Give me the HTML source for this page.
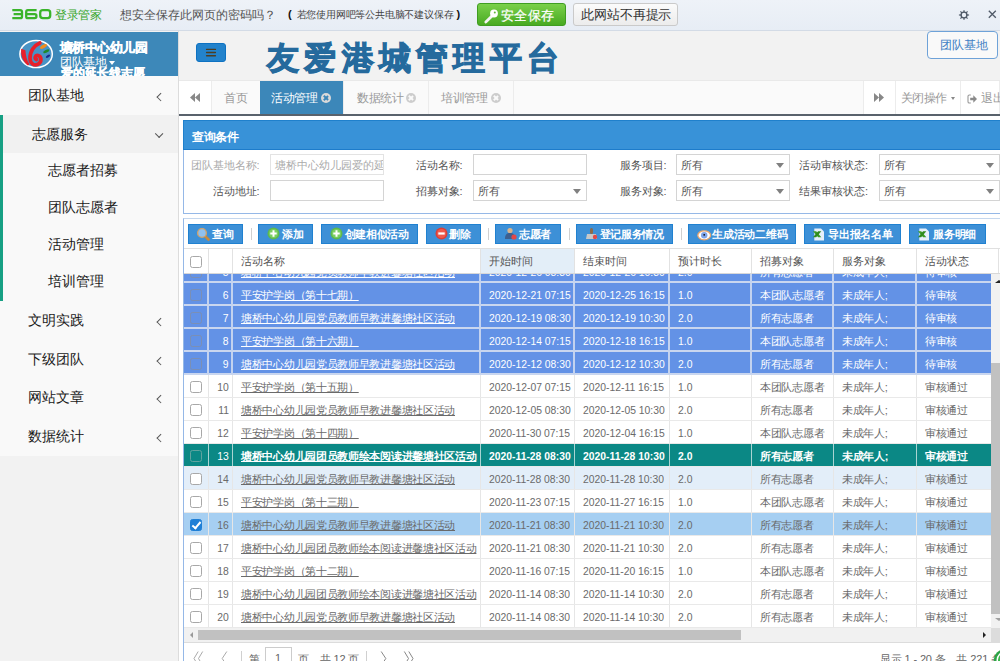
<!DOCTYPE html>
<html><head><meta charset="utf-8">
<style>
*{box-sizing:border-box;margin:0;padding:0}
html,body{width:1000px;height:661px;overflow:hidden}
body{position:relative;font-family:"Liberation Sans",sans-serif;background:#f2f2f2;color:#333}
.a{position:absolute}
/* top 360 bar */
#top{left:0;top:0;width:1000px;height:31px;background:linear-gradient(#eef2f8,#e7edf5);border-bottom:1px solid #d3dbe6}

#tgj{left:55px;top:7px;font-size:12px;color:#36a628;font-weight:normal;letter-spacing:-0.4px}
#tq{left:120px;top:7px;font-size:12px;color:#555}
#tq2{left:288px;top:8px;font-size:10px;color:#444;white-space:nowrap}
#bsave{left:477px;top:3px;width:89px;height:23px;border:1px solid #3f9d22;border-radius:3px;background:linear-gradient(#7ad04a,#48aa22);color:#fff;font-size:13px;line-height:23px;padding-left:22.5px;letter-spacing:0.5px;-webkit-text-stroke:0.25px #fff}
#bno{left:573px;top:3px;width:105px;height:23px;border:1px solid #cacaca;border-radius:3px;background:linear-gradient(#fbfbfb,#ececec);color:#333;font-size:13px;line-height:21px;padding-left:7px;letter-spacing:-0.1px}
/* header */
#logo{left:0;top:32px;width:178px;height:44px;background:#3d88b9;overflow:hidden}
#sbline{left:178px;top:31px;width:1px;height:630px;background:#dcdcdc}
#hamb{left:196px;top:43px;width:30px;height:19px;background:#2383cc;border:1px solid #0e72c2;border-radius:3px}
#hamb i{position:absolute;left:10px;width:10px;height:1.7px;background:#4b3f2a}
#title{left:267.3px;top:37px;font-size:32px;font-weight:900;color:#256a9d;letter-spacing:5.15px;-webkit-text-stroke:1.1px #256a9d;white-space:nowrap}
#bteam{left:927px;top:31px;width:71px;height:28px;border:1px solid #6ea2d8;border-radius:4px;background:#f9f9f9;color:#3f7fc4;font-size:12px;line-height:26px;padding-left:11.5px}
/* sidebar */
#menu{left:0;top:76px;width:178px;height:380px;background:#f9f9f9}
.mi{position:absolute;left:0;width:178px;font-size:14px;color:#1a1a1a;white-space:nowrap;font-family:"Liberation Serif",serif}
.mi span{position:absolute;left:28px}
.chev{position:absolute;left:158px;width:5.5px;height:5.5px;border-left:1.1px solid #555;border-bottom:1.1px solid #555;transform:rotate(45deg)}
/* tabs */
#tabs{left:179px;top:80px;width:821px;height:36px;background:#fafafa;border-top:1px solid #e9e9e9;border-bottom:2px solid #59626c}
.tb{position:absolute;top:0;height:33px;border-right:1px solid #ececec;font-size:12px;color:#999;line-height:35px;white-space:nowrap;letter-spacing:-0.3px}
.xc{position:absolute;width:10px;height:10px;border-radius:50%;background:#cdcdcd;top:11.5px}
.xc:before,.xc:after{content:"";position:absolute;left:4.2px;top:2px;width:1.6px;height:6px;background:#fafafa;transform:rotate(45deg)}
.xc:after{transform:rotate(-45deg)}
.xc.act{background:#d9d9d9}.xc.act:before,.xc.act:after{background:#3c87b9}
#content{left:179px;top:116px;width:821px;height:545px;background:#fff}
/* query panel */
#qp{left:183px;top:120px;width:817px;height:94px;border-left:1px solid #95b8e7;border-bottom:1px solid #95b8e7;background:#fff}
#qph{position:absolute;left:-1px;top:0;width:818px;height:30px;background:#3892d8;border-top:1px solid #1f80cc;border-left:1px solid #1f80cc;border-bottom:1px solid #1d7ccb}
#qph b{position:absolute;left:8px;top:8px;color:#fff;font-size:12px;letter-spacing:-0.4px}
.lb{position:absolute;font-size:11px;color:#555;text-align:right;white-space:nowrap;letter-spacing:-0.05px;font-weight:normal}
.inp{position:absolute;height:21px;border:1px solid #d4d4d4;background:#fff;font-size:11px;color:#555;line-height:21px;padding-left:4px;white-space:nowrap;overflow:hidden;letter-spacing:0px}
.inp.sel:after{content:"";position:absolute;right:5.5px;top:8px;border-left:4.5px solid transparent;border-right:4.5px solid transparent;border-top:5px solid #808080}
/* grid panel */
#gp{left:183px;top:218px;width:817px;height:443px;border-left:1px solid #95b8e7;border-top:1px solid #c5d7ee;background:#fff;overflow:hidden}
.btn{position:absolute;top:5px;height:20px;background:#3d90d7;border:1px solid #2081d0;color:#fff;font-size:11px;font-weight:bold;line-height:20px;white-space:nowrap;letter-spacing:-0.3px}
.btn .ic{position:absolute;top:2px;left:8px;width:13px;height:13px}
.btn span{position:absolute;left:23px;top:-1px}
.sep{position:absolute;top:9px;width:1px;height:12px;background:#d0d0d0}
#ghead{position:absolute;left:0;top:29px;width:816px;height:26px;background:#fff;border-top:1px solid #e0e0e0;border-bottom:1px solid #d8d8d8;z-index:3}
.th{position:absolute;top:0;height:24px;border-right:1px solid #e2e2e2;font-size:11px;color:#555;line-height:25px;padding-left:8px;white-space:nowrap;letter-spacing:0px}
.th.hl{background:#e3eef8}
.tr{position:absolute;left:0;width:808px;height:23px;border-bottom:1px solid #e9e9e9;background:#fff}
.td{position:absolute;top:0;height:22px;border-right:1px solid #e6e6e6;font-size:11px;color:#6a6a6a;line-height:24px;white-space:nowrap;overflow:hidden}
.td.ct{padding-left:8px;letter-spacing:-0.3px}
.td.cn{padding-left:8px}
.td.c1{text-align:right;padding-right:3px}
.td s{text-decoration:none;display:inline-block;font-size:11.5px;transform:scaleX(0.9);transform-origin:left center;position:relative;top:0px}
.td.c1 s{transform-origin:right center}
.td u{text-decoration:underline}
.cb{position:absolute;left:5.8px;top:6px;width:12px;height:12px;border:1px solid #a8a8a8;border-radius:2.5px;background:#fff}
.th .cb{top:6.5px}
.tr.sel{background:#6392e6;border-bottom:2px solid #c9d6ef}
.tr.sel .td{color:#fff;border-right:2px solid #c3d2ef}
.tr.sel .cb{background:transparent;border-color:#7b8fb4}
.tr.teal{background:#0b8885;border-bottom:1px solid #e9e9e9}
.tr.teal .td{color:#fff;font-weight:bold;border-right:1px solid #a9d4d2}
.tr.teal .td.c1{font-weight:normal}
.tr.teal .cb{background:transparent;border-color:#5fa39f}
.tr.hov{background:#e3eef9}
.tr.chk{background:#a6cff2}
.cb.on{background:#1f7fd6;border-color:#1f7fd6}
.cb.on:after{content:"";position:absolute;left:3px;top:0px;width:3px;height:7px;border-right:2px solid #fff;border-bottom:2px solid #fff;transform:rotate(40deg)}
#vs{position:absolute;left:807px;top:55px;width:10px;height:354px;background:#f1f1f1;z-index:4}
#vthumb{position:absolute;left:0;top:89px;width:9px;height:251px;background:#c1c1c1}
#hs{position:absolute;left:0;top:409px;width:808px;height:15px;background:#f1f1f1;border-bottom:1px solid #dcdcdc;z-index:4}
#hthumb{position:absolute;left:14px;top:2px;width:543px;height:10px;background:#c1c1c1}
#corner{position:absolute;left:807px;top:409px;width:10px;height:15px;background:#dcdcdc;z-index:4}
.pg{position:absolute;top:432.5px;font-size:11px;color:#666;white-space:nowrap;letter-spacing:-0.15px}
</style></head><body>
<!-- top bar -->
<div id="top" class="a"></div>
<svg id="t360" class="a" style="left:12px;top:9px" width="40" height="11" viewBox="0 0 40 11"><g fill="none" stroke="#3ab42a" stroke-width="2.3" stroke-linejoin="round"><path d="M0.3 1.2H8.2Q10 1.2 10 3V7.4Q10 9.2 8.2 9.2H0.3M1.6 5.2H10"/><path d="M24.6 1.2H15.8Q14.2 1.2 14.2 3V7.4Q14.2 9.2 15.8 9.2H22.8Q24.4 9.2 24.4 7.6V6.8Q24.4 5.2 22.8 5.2H14.2"/><rect x="28.2" y="1.2" width="10" height="8" rx="2.6"/></g></svg>
<div id="tgj" class="a">登录管家</div>
<div id="tq" class="a">想安全保存此网页的密码吗？</div>
<div id="tq2" class="a"><b style="color:#111;font-size:11px">(</b><span style="margin-left:5px;letter-spacing:-0.2px">若您使用网吧等公共电脑不建议保存</span><b style="color:#111;font-size:11px;margin-left:3px">)</b></div>
<div id="bsave" class="a"><svg style="position:absolute;left:5px;top:4px" width="16" height="16" viewBox="0 0 16 16"><path d="M9.5 7.5L2.8 14" stroke="#f4f4f4" stroke-width="2.8" stroke-linecap="round"/><circle cx="11" cy="5.5" r="3.9" fill="#fff"/><circle cx="11.8" cy="4.6" r="1" fill="#5fb83a"/></svg>安全保存</div>
<div id="bno" class="a">此网站不再提示</div>
<svg class="a" style="left:958px;top:8.5px" width="12" height="12" viewBox="0 0 12 12"><g fill="#505a68"><path d="M5.2 3.2L5.6 0.9H6.4L6.8 3.2Z" transform="rotate(0 6 6)"/><path d="M5.2 3.2L5.6 0.9H6.4L6.8 3.2Z" transform="rotate(45 6 6)"/><path d="M5.2 3.2L5.6 0.9H6.4L6.8 3.2Z" transform="rotate(90 6 6)"/><path d="M5.2 3.2L5.6 0.9H6.4L6.8 3.2Z" transform="rotate(135 6 6)"/><path d="M5.2 3.2L5.6 0.9H6.4L6.8 3.2Z" transform="rotate(180 6 6)"/><path d="M5.2 3.2L5.6 0.9H6.4L6.8 3.2Z" transform="rotate(225 6 6)"/><path d="M5.2 3.2L5.6 0.9H6.4L6.8 3.2Z" transform="rotate(270 6 6)"/><path d="M5.2 3.2L5.6 0.9H6.4L6.8 3.2Z" transform="rotate(315 6 6)"/></g><circle cx="6" cy="6" r="2.9" fill="none" stroke="#505a68" stroke-width="1.4"/></svg>
<svg class="a" style="left:987.5px;top:10px" width="9" height="9" viewBox="0 0 9 9"><path d="M0.8 0.8L7.8 7.8M7.8 0.8L0.8 7.8" stroke="#505a68" stroke-width="1.3"/></svg>

<!-- header -->
<div id="logo" class="a">
 <svg style="position:absolute;left:0;top:0" width="60" height="44" viewBox="0 0 60 44">
  <ellipse cx="36.1" cy="22" rx="16.2" ry="13.6" fill="#4893c5" stroke="#fff" stroke-width="1.5"/>
  <path d="M21.2 16.8 C20.5 23 22.5 29.5 28 33.6 L29.4 32.2 C26.6 28 25.8 23 25.4 18.2 Z" fill="#e8202a"/>
  <path d="M39.8 11 C34 13.5 29.8 19.5 30 26.5 C30.2 31.5 34 34 38 32.2 C41.8 30.3 42 24.5 38 23.5 C35.2 22.8 34.2 26.3 36.5 27.5" fill="none" stroke="#e8202a" stroke-width="3.7" stroke-linecap="round"/>
  <ellipse cx="43.5" cy="14.5" rx="3.8" ry="1.6" transform="rotate(-28 43.5 14.5)" fill="#f28c1c"/>
  <ellipse cx="46.3" cy="19.3" rx="3.3" ry="1.4" transform="rotate(-25 46.3 19.3)" fill="#1f8a2a"/>
  <ellipse cx="48" cy="24.2" rx="2.4" ry="1.2" transform="rotate(-30 48 24.2)" fill="#1b2a8c"/>
 </svg>
 <div style="position:absolute;left:60px;top:8px;font-size:12.5px;font-weight:900;-webkit-text-stroke:0.35px #fff;color:#fff;white-space:nowrap;letter-spacing:-0.55px">塘桥中心幼儿园</div>
 <div style="position:absolute;left:60px;top:22px;font-size:12px;color:#fff;white-space:nowrap;letter-spacing:-0.5px">团队基地</div>
 <div style="position:absolute;left:109px;top:29px;border-left:3px solid transparent;border-right:3px solid transparent;border-top:4px solid #fff"></div>
 <div style="position:absolute;left:61px;top:33px;font-size:12px;font-weight:900;-webkit-text-stroke:0.35px #fff;color:#fff;white-space:nowrap;letter-spacing:0px">爱的延长线志愿</div>
</div>
<div id="sbline" class="a"></div>
<div id="hamb" class="a"><svg style="position:absolute;left:-1px;top:-1px" width="30" height="19" viewBox="0 0 30 19"><path d="M10.6 6.4H19.4M10.6 9.5H19.4M10.6 12.7H19.4" stroke="#4d3d22" stroke-width="1.4" stroke-linecap="round"/></svg></div>
<div id="title" class="a">友爱港城管理平台</div>
<div id="bteam" class="a">团队基地</div>

<!-- sidebar -->
<div id="menu" class="a"></div>
<div class="a" style="left:0;top:115px;width:178px;height:37.6px;background:#f1f1f1"></div>
<div class="a" style="left:0;top:115px;width:3px;height:186px;background:#17a084"></div>
<div class="mi" style="top:87px"><span>团队基地</span><i class="chev" style="top:7px"></i></div>
<div class="mi" style="top:126px"><span style="left:32px">志愿服务</span><i class="chev" style="top:4.5px;left:155.5px;transform:rotate(-45deg)"></i></div>
<div class="mi" style="top:162px"><span style="left:48px">志愿者招募</span></div>
<div class="mi" style="top:199px"><span style="left:48px">团队志愿者</span></div>
<div class="mi" style="top:236px"><span style="left:48px">活动管理</span></div>
<div class="mi" style="top:273px"><span style="left:48px">培训管理</span></div>
<div class="mi" style="top:312px"><span>文明实践</span><i class="chev" style="top:7px"></i></div>
<div class="mi" style="top:351px"><span>下级团队</span><i class="chev" style="top:7px"></i></div>
<div class="mi" style="top:389px"><span>网站文章</span><i class="chev" style="top:7px"></i></div>
<div class="mi" style="top:428px"><span>数据统计</span><i class="chev" style="top:7px"></i></div>

<!-- tabs -->
<div id="content" class="a"></div>
<div id="tabs" class="a">
 <div class="tb" style="left:0;width:33px;background:#fff">
  <svg style="position:absolute;left:11px;top:12px" width="10" height="9" viewBox="0 0 10 9"><path d="M5 0L0 4.5L5 9ZM10 0L5 4.5L10 9Z" fill="#888"/></svg></div>
 <div class="tb" style="left:33px;width:49px;padding-left:12px">首页</div>
 <div class="tb" style="left:81px;width:84px;background:#3c87b9;color:#fff;padding-left:11px">活动管理<i class="xc act" style="left:61px"></i></div>
 <div class="tb" style="left:165px;width:85px;padding-left:13px">数据统计<i class="xc" style="left:62px"></i></div>
 <div class="tb" style="left:250px;width:85px;padding-left:12px">培训管理<i class="xc" style="left:62px"></i></div>
 <div class="tb" style="left:684px;width:33px;background:#fff;border-left:1px solid #ececec">
  <svg style="position:absolute;left:10px;top:12px" width="10" height="9" viewBox="0 0 10 9"><path d="M0 0L5 4.5L0 9ZM5 0L10 4.5L5 9Z" fill="#888"/></svg></div>
 <div class="tb" style="left:716px;width:66px;background:#fff;padding-left:5px;border-left:1px solid #ececec;letter-spacing:-0.6px">关闭操作<i style="position:absolute;left:54.5px;top:15.5px;border-left:2.7px solid transparent;border-right:2.7px solid transparent;border-top:3px solid #888"></i></div>
 <div class="tb" style="left:782px;width:39px;background:#fff;padding-left:20px">退出
  <svg style="position:absolute;left:6px;top:12.5px" width="11" height="10" viewBox="0 0 11 10"><path d="M3.8 1H2.3Q1 1 1 2.3V7.7Q1 9 2.3 9H3.8" stroke="#999" stroke-width="1.1" fill="none"/><path d="M3.2 3.8H6.3V1.2L10 5L6.3 8.8V6.2H3.2Z" fill="#8a8a8a"/></svg></div>
</div>

<!-- query panel -->
<div id="qp" class="a">
 <div id="qph"><b>查询条件</b></div>
 <div class="lb" style="left:-24.5px;width:100px;top:38px;color:#aaa;">团队基地名称:</div>
 <div class="inp" style="left:86px;top:34px;width:114px;color:#aaa;border-color:#e3e3e3">塘桥中心幼儿园爱的延长线志愿</div>
 <div class="lb" style="left:-24.5px;width:100px;top:64px;">活动地址:</div>
 <div class="inp" style="left:86px;top:60px;width:114px"></div>
 <div class="lb" style="left:178.5px;width:100px;top:38px;">活动名称:</div>
 <div class="inp" style="left:289px;top:34px;width:114px"></div>
 <div class="lb" style="left:178.5px;width:100px;top:64px;">招募对象:</div>
 <div class="inp sel" style="left:289px;top:60px;width:114px">所有</div>
 <div class="lb" style="left:382.5px;width:100px;top:38px;">服务项目:</div>
 <div class="inp sel" style="left:492px;top:34px;width:114px">所有</div>
 <div class="lb" style="left:382.5px;width:100px;top:64px;">服务对象:</div>
 <div class="inp sel" style="left:492px;top:60px;width:114px">所有</div>
 <div class="lb" style="left:584px;width:100px;top:38px;">活动审核状态:</div>
 <div class="inp sel" style="left:695px;top:34px;width:121px">所有</div>
 <div class="lb" style="left:584px;width:100px;top:64px;">结果审核状态:</div>
 <div class="inp sel" style="left:695px;top:60px;width:121px">所有</div>
</div>

<!-- grid panel -->
<div id="gp" class="a">
 <div class="btn" style="left:4.2px;width:55.2px"><svg class="ic" style="left:6.5px;top:1.5px;width:14px;height:14px" viewBox="0 0 14 14"><path d="M8.8 8.8L12.5 12.5" stroke="#c98a3c" stroke-width="2.6" stroke-linecap="round"/><circle cx="6" cy="6" r="4.4" fill="#8fc1f0" stroke="#cfa36c" stroke-width="1.4"/></svg><span>查询</span></div>
 <div class="sep" style="left:66.8px"></div>
 <div class="btn" style="left:74.1px;width:55.4px"><svg class="ic" viewBox="0 0 13 13"><circle cx="6.5" cy="6.5" r="6" fill="#5db94e"/><circle cx="6.5" cy="6.5" r="4.6" fill="#7bcf62"/><path d="M6.5 3.3V9.7M3.3 6.5H9.7" stroke="#fff" stroke-width="2"/></svg><span>添加</span></div>
 <div class="btn" style="left:136.6px;width:97.4px"><svg class="ic" viewBox="0 0 13 13"><circle cx="6.5" cy="6.5" r="6" fill="#5db94e"/><circle cx="6.5" cy="6.5" r="4.6" fill="#7bcf62"/><path d="M6.5 3.3V9.7M3.3 6.5H9.7" stroke="#fff" stroke-width="2"/></svg><span>创建相似活动</span></div>
 <div class="btn" style="left:241.6px;width:55.2px"><svg class="ic" viewBox="0 0 13 13"><circle cx="6.5" cy="6.5" r="6" fill="#d8403a"/><circle cx="6.5" cy="6.5" r="4.6" fill="#ef5a4c"/><path d="M3.3 6.5H9.7" stroke="#fff" stroke-width="2.2"/></svg><span style="left:22.5px">删除</span></div>
 <div class="sep" style="left:304.2px"></div>
 <div class="btn" style="left:311px;width:66px"><svg class="ic" viewBox="0 0 13 13"><circle cx="6" cy="3.5" r="2.6" fill="#d9b38a"/><path d="M1 12C1 7 3 6 6 6C9 6 11 7 11 12Z" fill="#3d5f8f"/><circle cx="10" cy="10" r="2.6" fill="#e04848"/></svg><span>志愿者</span></div>
 <div class="sep" style="left:384.6px"></div>
 <div class="btn" style="left:391.7px;width:97.8px"><svg class="ic" viewBox="0 0 13 13"><rect x="5" y="1" width="3" height="6" rx="1.5" fill="#8a6a4a"/><path d="M1 12L2 7H11L12 12Z" fill="#c8c8c8"/><circle cx="10" cy="10" r="2.2" fill="#e04848"/></svg><span>登记服务情况</span></div>
 <div class="sep" style="left:497.2px"></div>
 <div class="btn" style="left:504.4px;width:108.1px"><svg class="ic" style="width:15px;height:11px;left:8px;top:4.5px" viewBox="0 0 15 11"><ellipse cx="7.2" cy="5.3" rx="6.4" ry="4.5" fill="#fff" stroke="#e8a46c" stroke-width="1.3"/><circle cx="7.2" cy="5.3" r="3.2" fill="#7ea3ea"/><circle cx="7.2" cy="4.8" r="0.9" fill="#111"/></svg><span>生成活动二维码</span></div>
 <div class="btn" style="left:620.3px;width:97px"><svg class="ic" style="left:7.5px;top:2.5px" viewBox="0 0 13 13"><path d="M1.3 0.5H8L11 3.5V12.5H1.3Z" fill="#e6effa"/><path d="M0 3.3H3.2L8.3 9.2H5.1Z" fill="#3a9a22"/><path d="M8.3 3.3H5.1L0 9.2H3.2Z" fill="#2f8a1c"/></svg><span>导出报名名单</span></div>
 <div class="btn" style="left:725.3px;width:76.4px"><svg class="ic" style="left:7.5px;top:2.5px" viewBox="0 0 13 13"><path d="M1.3 0.5H8L11 3.5V12.5H1.3Z" fill="#e6effa"/><path d="M0 3.3H3.2L8.3 9.2H5.1Z" fill="#3a9a22"/><path d="M8.3 3.3H5.1L0 9.2H3.2Z" fill="#2f8a1c"/></svg><span>服务明细</span></div>

 <div id="ghead"><div class="th c0" style="left:0px;width:25px"><i class="cb"></i></div><div class="th c1" style="left:25px;width:24px"></div><div class="th ct" style="left:49px;width:248px">活动名称</div><div class="th ct hl" style="left:297px;width:94px">开始时间</div><div class="th ct" style="left:391px;width:95px">结束时间</div><div class="th ct" style="left:486px;width:82px">预计时长</div><div class="th ct" style="left:568px;width:82px">招募对象</div><div class="th ct" style="left:650px;width:83px">服务对象</div><div class="th ct" style="left:733px;width:82px">活动状态</div></div>
 <div style="position:absolute;left:0;top:-218px"><div class="tr sel" style="top:259px"><div class="td c0" style="left:0px;width:25px"><i class="cb"></i></div><div class="td c1" style="left:25px;width:24px"><s>5</s></div><div class="td ct" style="left:49px;width:248px"><u>塘桥中心幼儿园党员教师早教进馨塘社区活动</u></div><div class="td cn" style="left:297px;width:94px"><s>2020-12-26 08:30</s></div><div class="td cn" style="left:391px;width:95px"><s>2020-12-26 10:30</s></div><div class="td cn" style="left:486px;width:82px"><s>2.0</s></div><div class="td ct" style="left:568px;width:82px">所有志愿者</div><div class="td ct" style="left:650px;width:83px">未成年人;</div><div class="td ct" style="left:733px;width:82px">待审核</div></div><div class="tr sel" style="top:282px"><div class="td c0" style="left:0px;width:25px"><i class="cb"></i></div><div class="td c1" style="left:25px;width:24px"><s>6</s></div><div class="td ct" style="left:49px;width:248px"><u>平安护学岗（第十七期）</u></div><div class="td cn" style="left:297px;width:94px"><s>2020-12-21 07:15</s></div><div class="td cn" style="left:391px;width:95px"><s>2020-12-25 16:15</s></div><div class="td cn" style="left:486px;width:82px"><s>1.0</s></div><div class="td ct" style="left:568px;width:82px">本团队志愿者</div><div class="td ct" style="left:650px;width:83px">未成年人;</div><div class="td ct" style="left:733px;width:82px">待审核</div></div><div class="tr sel" style="top:305px"><div class="td c0" style="left:0px;width:25px"><i class="cb"></i></div><div class="td c1" style="left:25px;width:24px"><s>7</s></div><div class="td ct" style="left:49px;width:248px"><u>塘桥中心幼儿园党员教师早教进馨塘社区活动</u></div><div class="td cn" style="left:297px;width:94px"><s>2020-12-19 08:30</s></div><div class="td cn" style="left:391px;width:95px"><s>2020-12-19 10:30</s></div><div class="td cn" style="left:486px;width:82px"><s>2.0</s></div><div class="td ct" style="left:568px;width:82px">所有志愿者</div><div class="td ct" style="left:650px;width:83px">未成年人;</div><div class="td ct" style="left:733px;width:82px">待审核</div></div><div class="tr sel" style="top:328px"><div class="td c0" style="left:0px;width:25px"><i class="cb"></i></div><div class="td c1" style="left:25px;width:24px"><s>8</s></div><div class="td ct" style="left:49px;width:248px"><u>平安护学岗（第十六期）</u></div><div class="td cn" style="left:297px;width:94px"><s>2020-12-14 07:15</s></div><div class="td cn" style="left:391px;width:95px"><s>2020-12-18 16:15</s></div><div class="td cn" style="left:486px;width:82px"><s>1.0</s></div><div class="td ct" style="left:568px;width:82px">本团队志愿者</div><div class="td ct" style="left:650px;width:83px">未成年人;</div><div class="td ct" style="left:733px;width:82px">待审核</div></div><div class="tr sel" style="top:351px"><div class="td c0" style="left:0px;width:25px"><i class="cb"></i></div><div class="td c1" style="left:25px;width:24px"><s>9</s></div><div class="td ct" style="left:49px;width:248px"><u>塘桥中心幼儿园党员教师早教进馨塘社区活动</u></div><div class="td cn" style="left:297px;width:94px"><s>2020-12-12 08:30</s></div><div class="td cn" style="left:391px;width:95px"><s>2020-12-12 10:30</s></div><div class="td cn" style="left:486px;width:82px"><s>2.0</s></div><div class="td ct" style="left:568px;width:82px">所有志愿者</div><div class="td ct" style="left:650px;width:83px">未成年人;</div><div class="td ct" style="left:733px;width:82px">待审核</div></div><div class="tr " style="top:374px"><div class="td c0" style="left:0px;width:25px"><i class="cb"></i></div><div class="td c1" style="left:25px;width:24px"><s>10</s></div><div class="td ct" style="left:49px;width:248px"><u>平安护学岗（第十五期）</u></div><div class="td cn" style="left:297px;width:94px"><s>2020-12-07 07:15</s></div><div class="td cn" style="left:391px;width:95px"><s>2020-12-11 16:15</s></div><div class="td cn" style="left:486px;width:82px"><s>1.0</s></div><div class="td ct" style="left:568px;width:82px">本团队志愿者</div><div class="td ct" style="left:650px;width:83px">未成年人;</div><div class="td ct" style="left:733px;width:82px">审核通过</div></div><div class="tr " style="top:397px"><div class="td c0" style="left:0px;width:25px"><i class="cb"></i></div><div class="td c1" style="left:25px;width:24px"><s>11</s></div><div class="td ct" style="left:49px;width:248px"><u>塘桥中心幼儿园党员教师早教进馨塘社区活动</u></div><div class="td cn" style="left:297px;width:94px"><s>2020-12-05 08:30</s></div><div class="td cn" style="left:391px;width:95px"><s>2020-12-05 10:30</s></div><div class="td cn" style="left:486px;width:82px"><s>2.0</s></div><div class="td ct" style="left:568px;width:82px">所有志愿者</div><div class="td ct" style="left:650px;width:83px">未成年人;</div><div class="td ct" style="left:733px;width:82px">审核通过</div></div><div class="tr " style="top:420px"><div class="td c0" style="left:0px;width:25px"><i class="cb"></i></div><div class="td c1" style="left:25px;width:24px"><s>12</s></div><div class="td ct" style="left:49px;width:248px"><u>平安护学岗（第十四期）</u></div><div class="td cn" style="left:297px;width:94px"><s>2020-11-30 07:15</s></div><div class="td cn" style="left:391px;width:95px"><s>2020-12-04 16:15</s></div><div class="td cn" style="left:486px;width:82px"><s>1.0</s></div><div class="td ct" style="left:568px;width:82px">本团队志愿者</div><div class="td ct" style="left:650px;width:83px">未成年人;</div><div class="td ct" style="left:733px;width:82px">审核通过</div></div><div class="tr teal" style="top:443px"><div class="td c0" style="left:0px;width:25px"><i class="cb"></i></div><div class="td c1" style="left:25px;width:24px"><s>13</s></div><div class="td ct" style="left:49px;width:248px"><u>塘桥中心幼儿园团员教师绘本阅读进馨塘社区活动</u></div><div class="td cn" style="left:297px;width:94px"><s>2020-11-28 08:30</s></div><div class="td cn" style="left:391px;width:95px"><s>2020-11-28 10:30</s></div><div class="td cn" style="left:486px;width:82px"><s>2.0</s></div><div class="td ct" style="left:568px;width:82px">所有志愿者</div><div class="td ct" style="left:650px;width:83px">未成年人;</div><div class="td ct" style="left:733px;width:82px">审核通过</div></div><div class="tr hov" style="top:466px"><div class="td c0" style="left:0px;width:25px"><i class="cb"></i></div><div class="td c1" style="left:25px;width:24px"><s>14</s></div><div class="td ct" style="left:49px;width:248px"><u>塘桥中心幼儿园党员教师早教进馨塘社区活动</u></div><div class="td cn" style="left:297px;width:94px"><s>2020-11-28 08:30</s></div><div class="td cn" style="left:391px;width:95px"><s>2020-11-28 10:30</s></div><div class="td cn" style="left:486px;width:82px"><s>2.0</s></div><div class="td ct" style="left:568px;width:82px">所有志愿者</div><div class="td ct" style="left:650px;width:83px">未成年人;</div><div class="td ct" style="left:733px;width:82px">审核通过</div></div><div class="tr " style="top:489px"><div class="td c0" style="left:0px;width:25px"><i class="cb"></i></div><div class="td c1" style="left:25px;width:24px"><s>15</s></div><div class="td ct" style="left:49px;width:248px"><u>平安护学岗（第十三期）</u></div><div class="td cn" style="left:297px;width:94px"><s>2020-11-23 07:15</s></div><div class="td cn" style="left:391px;width:95px"><s>2020-11-27 16:15</s></div><div class="td cn" style="left:486px;width:82px"><s>1.0</s></div><div class="td ct" style="left:568px;width:82px">本团队志愿者</div><div class="td ct" style="left:650px;width:83px">未成年人;</div><div class="td ct" style="left:733px;width:82px">审核通过</div></div><div class="tr chk" style="top:512px"><div class="td c0" style="left:0px;width:25px"><i class="cb on"></i></div><div class="td c1" style="left:25px;width:24px"><s>16</s></div><div class="td ct" style="left:49px;width:248px"><u>塘桥中心幼儿园党员教师早教进馨塘社区活动</u></div><div class="td cn" style="left:297px;width:94px"><s>2020-11-21 08:30</s></div><div class="td cn" style="left:391px;width:95px"><s>2020-11-21 10:30</s></div><div class="td cn" style="left:486px;width:82px"><s>2.0</s></div><div class="td ct" style="left:568px;width:82px">所有志愿者</div><div class="td ct" style="left:650px;width:83px">未成年人;</div><div class="td ct" style="left:733px;width:82px">审核通过</div></div><div class="tr " style="top:535px"><div class="td c0" style="left:0px;width:25px"><i class="cb"></i></div><div class="td c1" style="left:25px;width:24px"><s>17</s></div><div class="td ct" style="left:49px;width:248px"><u>塘桥中心幼儿园团员教师绘本阅读进馨塘社区活动</u></div><div class="td cn" style="left:297px;width:94px"><s>2020-11-21 08:30</s></div><div class="td cn" style="left:391px;width:95px"><s>2020-11-21 10:30</s></div><div class="td cn" style="left:486px;width:82px"><s>2.0</s></div><div class="td ct" style="left:568px;width:82px">所有志愿者</div><div class="td ct" style="left:650px;width:83px">未成年人;</div><div class="td ct" style="left:733px;width:82px">审核通过</div></div><div class="tr " style="top:558px"><div class="td c0" style="left:0px;width:25px"><i class="cb"></i></div><div class="td c1" style="left:25px;width:24px"><s>18</s></div><div class="td ct" style="left:49px;width:248px"><u>平安护学岗（第十二期）</u></div><div class="td cn" style="left:297px;width:94px"><s>2020-11-16 07:15</s></div><div class="td cn" style="left:391px;width:95px"><s>2020-11-20 16:15</s></div><div class="td cn" style="left:486px;width:82px"><s>1.0</s></div><div class="td ct" style="left:568px;width:82px">本团队志愿者</div><div class="td ct" style="left:650px;width:83px">未成年人;</div><div class="td ct" style="left:733px;width:82px">审核通过</div></div><div class="tr " style="top:581px"><div class="td c0" style="left:0px;width:25px"><i class="cb"></i></div><div class="td c1" style="left:25px;width:24px"><s>19</s></div><div class="td ct" style="left:49px;width:248px"><u>塘桥中心幼儿园团员教师绘本阅读进馨塘社区活动</u></div><div class="td cn" style="left:297px;width:94px"><s>2020-11-14 08:30</s></div><div class="td cn" style="left:391px;width:95px"><s>2020-11-14 10:30</s></div><div class="td cn" style="left:486px;width:82px"><s>2.0</s></div><div class="td ct" style="left:568px;width:82px">所有志愿者</div><div class="td ct" style="left:650px;width:83px">未成年人;</div><div class="td ct" style="left:733px;width:82px">审核通过</div></div><div class="tr " style="top:604px"><div class="td c0" style="left:0px;width:25px"><i class="cb"></i></div><div class="td c1" style="left:25px;width:24px"><s>20</s></div><div class="td ct" style="left:49px;width:248px"><u>塘桥中心幼儿园党员教师早教进馨塘社区活动</u></div><div class="td cn" style="left:297px;width:94px"><s>2020-11-14 08:30</s></div><div class="td cn" style="left:391px;width:95px"><s>2020-11-14 10:30</s></div><div class="td cn" style="left:486px;width:82px"><s>2.0</s></div><div class="td ct" style="left:568px;width:82px">所有志愿者</div><div class="td ct" style="left:650px;width:83px">未成年人;</div><div class="td ct" style="left:733px;width:82px">审核通过</div></div></div>
 <div id="vs"><div id="vthumb"></div>
  <i style="position:absolute;left:4px;top:6px;border-left:4px solid transparent;border-right:4px solid transparent;border-bottom:3.5px solid #222"></i>
  <i style="position:absolute;left:4px;top:344px;border-left:4px solid transparent;border-right:4px solid transparent;border-top:3.5px solid #a0a0a0"></i>
 </div>
 <div id="hs"><div id="hthumb"></div>
  <i style="position:absolute;left:6px;top:4px;border-top:3px solid transparent;border-bottom:3px solid transparent;border-right:3px solid #999"></i>
  <i style="position:absolute;left:799px;top:4px;border-top:3px solid transparent;border-bottom:3px solid transparent;border-left:3px solid #222"></i>
 </div>
 <div id="corner"></div>
 <svg class="a" style="left:9px;top:432px" width="11" height="15" viewBox="0 0 11 15"><path d="M5.2 0.5L1 7.5L5.2 14.5M9.7 0.5L5.5 7.5L9.7 14.5" stroke="#aaa" stroke-width="1" fill="none"/></svg>
 <svg class="a" style="left:37px;top:432px" width="7" height="15" viewBox="0 0 7 15"><path d="M5.8 0.5L1.2 7.5L5.8 14.5" stroke="#aaa" stroke-width="1" fill="none"/></svg>
 <div class="sep" style="left:56.5px;top:432px;height:14px"></div>
 <div class="pg" style="left:65px">第</div>
 <div class="a" style="left:81px;top:428px;width:27px;height:22px;border:1px solid #ccc;background:#fff"></div>
 <div class="pg" style="left:91px">1</div>
 <div class="pg" style="left:114px">页，共 12 页</div>
 <div class="sep" style="left:182px;top:432px;height:14px"></div>
 <svg class="a" style="left:196px;top:432px" width="7" height="15" viewBox="0 0 7 15"><path d="M1.2 0.5L5.8 7.5L1.2 14.5" stroke="#888" stroke-width="1" fill="none"/></svg>
 <svg class="a" style="left:219px;top:432px" width="11" height="15" viewBox="0 0 11 15"><path d="M1.3 0.5L5.5 7.5L1.3 14.5M5.8 0.5L10 7.5L5.8 14.5" stroke="#888" stroke-width="1" fill="none"/></svg>
 <div class="pg" style="left:696px">显示 1 - 20 条，共 221 条</div>
</div>
<svg class="a" style="left:993px;top:647px" width="20" height="22" viewBox="0 0 20 22"><circle cx="12" cy="13" r="11" fill="#2da446"/><circle cx="12" cy="13" r="8.5" fill="#fff"/><circle cx="12" cy="13" r="7" fill="#3cb94e"/></svg>
</body></html>
